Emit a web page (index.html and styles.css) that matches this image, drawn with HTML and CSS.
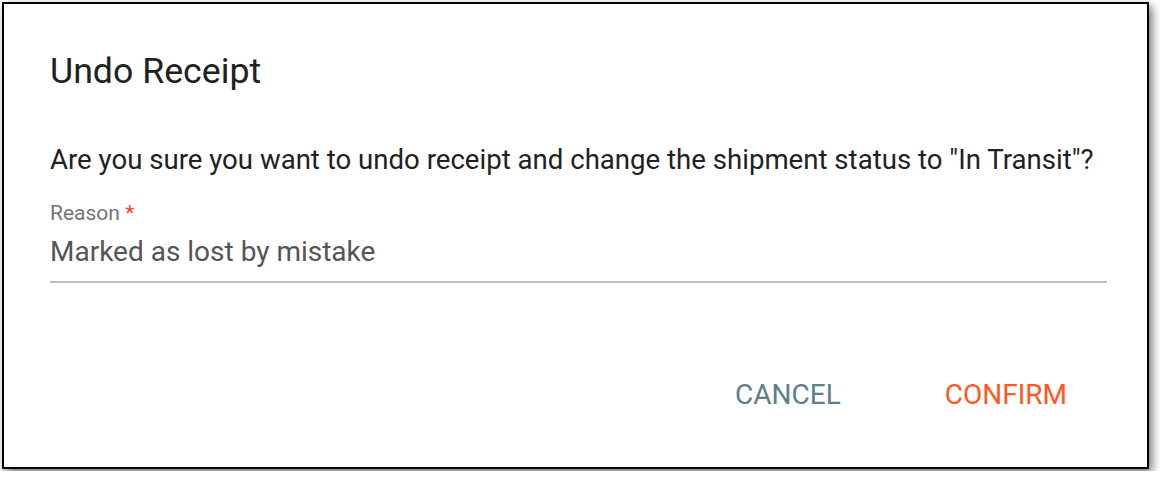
FILE: index.html
```html
<!DOCTYPE html>
<html>
<head>
<meta charset="utf-8">
<link rel="stylesheet" href="styles.css">
</head>
<body>
<div class="dialog">
  <h2 class="title">Undo Receipt</h2>
  <p class="message">Are you sure you want to undo receipt and change the shipment status to "In Transit"?</p>
  <div class="field">
    <label class="label">Reason <span class="req">*</span></label>
    <div class="input">Marked as lost by mistake</div>
  </div>
  <div class="actions">
    <button class="btn btn-cancel">CANCEL</button>
    <button class="btn btn-confirm">CONFIRM</button>
  </div>
</div>
</body>
</html>
```

FILE: styles.css
```css
html, body {
  margin: 0;
  padding: 0;
  background: #fff;
}
body {
  padding: 2px;
  font-family: Roboto, "Liberation Sans", sans-serif;
}
.dialog {
  width: 1147px;
  height: 467px;
  box-sizing: border-box;
  border: 2.5px solid #000;
  background: #fff;
  box-shadow: 3px 4px 9px rgba(0,0,0,0.55);
  padding: 0 40px 0 46px;
  display: flex;
  flex-direction: column;
}
.title {
  margin: 43px 0 0;
  font-size: 35.7px;
  font-weight: 400;
  line-height: 48px;
  color: #212121;
}
.message {
  margin: 45px 0 0;
  font-size: 27.6px;
  line-height: 40px;
  color: #212121;
  white-space: nowrap;
}
.field {
  margin-top: 21px;
  display: flex;
  flex-direction: column;
  border-bottom: 2px solid #bdbdbd;
}
.label {
  font-size: 21px;
  line-height: 24px;
  color: #757575;
}
.req { color: #f44336; }
.input {
  margin-top: 7px;
  font-size: 28px;
  line-height: 40px;
  color: #555;
  padding-bottom: 9px;
}
.actions {
  margin-top: auto;
  margin-bottom: 46px;
  display: flex;
  justify-content: flex-end;
  gap: 72px;
  padding-right: 24px;
}
.btn {
  background: none;
  border: none;
  font-family: inherit;
  font-size: 28px;
  line-height: 36px;
  padding: 8px 16px;
  letter-spacing: 0;
}
.btn-cancel { color: #607d8b; }
.btn-confirm { color: #ff5722; }
```
